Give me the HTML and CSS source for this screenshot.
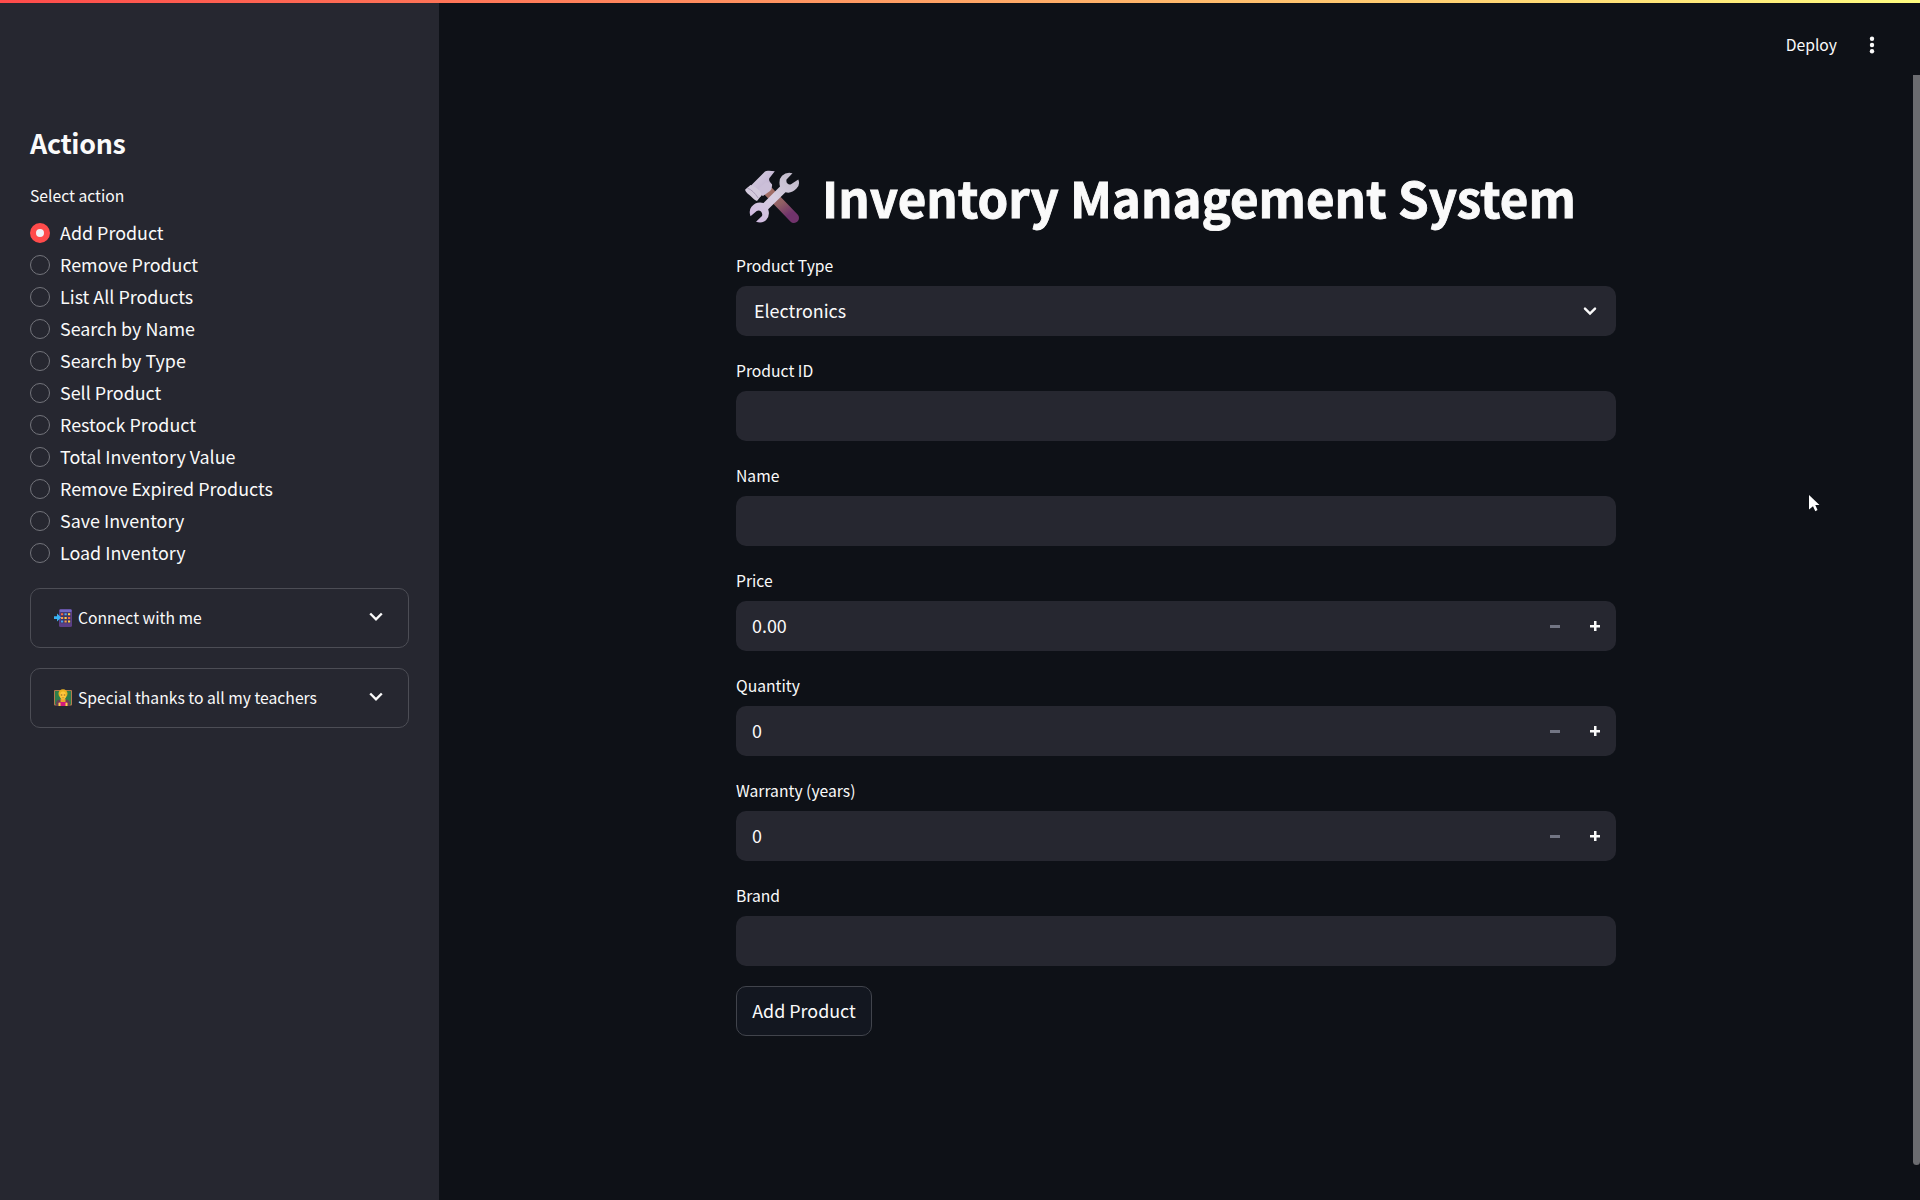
FILE: index.html
```html
<!DOCTYPE html>
<html lang="en">
<head>
<meta charset="utf-8">
<title>Inventory Management System</title>
<link rel="stylesheet" href="styles.css">
</head>
<body>
<div class="decoration"></div>
<div class="app">
  <aside class="sidebar">
    <h2 class="sidebar-title">Actions</h2>
    <div class="radio-label">Select action</div>
    <div class="radio-group">
      <div class="radio"><span class="dot checked"></span><span class="radio-text">Add Product</span></div>
      <div class="radio"><span class="dot"></span><span class="radio-text">Remove Product</span></div>
      <div class="radio"><span class="dot"></span><span class="radio-text">List All Products</span></div>
      <div class="radio"><span class="dot"></span><span class="radio-text">Search by Name</span></div>
      <div class="radio"><span class="dot"></span><span class="radio-text">Search by Type</span></div>
      <div class="radio"><span class="dot"></span><span class="radio-text">Sell Product</span></div>
      <div class="radio"><span class="dot"></span><span class="radio-text">Restock Product</span></div>
      <div class="radio"><span class="dot"></span><span class="radio-text">Total Inventory Value</span></div>
      <div class="radio"><span class="dot"></span><span class="radio-text">Remove Expired Products</span></div>
      <div class="radio"><span class="dot"></span><span class="radio-text">Save Inventory</span></div>
      <div class="radio"><span class="dot"></span><span class="radio-text">Load Inventory</span></div>
    </div>
    <div class="expander">
      <svg class="emoji" width="18" height="18" viewBox="0 0 18 18">
        <rect x="5" y="0" width="13" height="18" rx="1.6" fill="#5b3f86"/>
        <rect x="5.6" y="0.5" width="12" height="2.4" rx="1" fill="#7168c4"/>
        <rect x="6.5" y="3.4" width="10.2" height="10.8" fill="#3d3565"/>
        <path d="M7 4.2h2.2v2H7zM14 7.9h2.2v2H14z" fill="#f4673f"/>
        <path d="M10.5 4.2h2.2v2h-2.2zM7 11.5h2.2v2H7z" fill="#4ba5f0"/>
        <path d="M14 4.2h2.2v2H14zM10.5 7.9h2.2v2h-2.2zM14 11.5h2.2v2H14z" fill="#ffcf45"/>
        <path d="M7 7.9h2.2v2H7zM10.5 11.5h2.2v2h-2.2z" fill="#ff9a4c"/>
        <path d="M0 7.3h3V4.6l4.2 4-4.2 4V10H0z" fill="#39b3f5"/>
      </svg>
      <span class="expander-text">Connect with me</span>
      <svg class="chevron" width="14" height="10" viewBox="0 0 14 10"><path d="M1.2 1.5 7 7.3 12.8 1.5" fill="none" stroke="#fafafa" stroke-width="2.4"/></svg>
    </div>
    <div class="expander">
      <svg class="emoji" width="18" height="18" viewBox="0 0 18 18">
        <rect x="0" y="1" width="18" height="15.5" rx="1" fill="#b57a4d"/>
        <rect x="1" y="2" width="16" height="13.5" fill="#2f7d4b"/>
        <path d="M2 17v-3.5Q2.5 11 6 10.5h6q3.5 .5 4 3V17z" fill="#654052"/>
        <path d="M6.5 10h5v3h-5z" fill="#e9a52d"/>
        <circle cx="9" cy="4.8" r="4.5" fill="#eeb31f"/>
        <ellipse cx="9" cy="6.5" rx="3" ry="4" fill="#ffc83d"/>
        <path d="M6.8 6h1.5M9.8 6h1.5" stroke="#8b5b25" stroke-width="1"/>
        <path d="M7.8 8.8h2.5" stroke="#c77a21" stroke-width=".7"/>
        <path d="M5 13h8v4H5z" fill="#d11b7c"/>
        <path d="M4.5 13.7h2v3.3h-2zM11.5 13.7h2v3.3h-2z" fill="#ffd04a"/>
      </svg>
      <span class="expander-text">Special thanks to all my teachers</span>
      <svg class="chevron" width="14" height="10" viewBox="0 0 14 10"><path d="M1.2 1.5 7 7.3 12.8 1.5" fill="none" stroke="#fafafa" stroke-width="2.4"/></svg>
    </div>
  </aside>
  <main class="main">
    <header class="toolbar">
      <span class="deploy">Deploy</span>
      <svg class="menu" width="6" height="18" viewBox="0 0 6 18" fill="#fafafa"><circle cx="3" cy="2.7" r="2.2"/><circle cx="3" cy="9" r="2.2"/><circle cx="3" cy="15.3" r="2.2"/></svg>
    </header>
    <div class="content">
      <h1 class="title">
        <svg class="tools" width="56" height="56" viewBox="0 0 56 56">
          <defs>
            <linearGradient id="handle" x1="0" y1="0" x2=".6" y2="1"><stop offset="0" stop-color="#a47167"/><stop offset=".55" stop-color="#916064"/><stop offset="1" stop-color="#71336c"/></linearGradient>
            <linearGradient id="steel" x1="0" y1="0" x2="1" y2="1"><stop offset="0" stop-color="#d9d1e3"/><stop offset="1" stop-color="#b9a9cb"/></linearGradient>
            <linearGradient id="wrench" x1="1" y1="0" x2="0" y2="1"><stop offset="0" stop-color="#bdb6c5"/><stop offset=".5" stop-color="#d7cfe1"/><stop offset="1" stop-color="#ceb5df"/></linearGradient>
          </defs>
          <path d="M24 21 50 48" stroke="url(#handle)" stroke-width="10" stroke-linecap="round"/>
          <path d="M21 1.5Q22.500.5 25 .8L30.8 1.2 25.5 8Q24.5 10 26 12L28 14.5 16 27 5.5 17z" fill="url(#steel)"/>
          <path d="M15 18 21.5 12.5Q25.5 11.5 28 14.5 28.5 18 26 21L19 26Q14 24 15 18z" fill="#cbbfd8"/>
          <path d="M6.5 15Q11 16 15.5 20.5 18 24 17 26L13 31Q11 30.5 6 25.5 .8 21.5 1.2 19.5z" fill="#d3cadd"/>
          <path d="M3.5 18.2Q9 20 14.3 28.2" fill="none" stroke="#a99bb8" stroke-width="1"/>
          <path d="M48.5 3.2 42.5 9.6Q42 12.5 43.5 13.6 45 15 47 14.3L54.3 9.5Q56.5 14.5 52.5 18.6 47.5 24 41.5 22.3L24.2 39.2Q26.3 46.5 22 50.2 18 53.8 12 51.8L18 46Q18.8 43.5 17 41.6 15.2 40 12.7 41L6.5 46.2Q4.5 40.5 7.5 36.8 12 31.2 19.5 33L36 16.5Q34.3 9.5 38 5.8 42.5 1.5 48.5 3.2z" fill="url(#wrench)"/>
        </svg>
        <span class="title-text">Inventory Management System</span>
      </h1>
      <div class="field"><label class="label">Product Type</label>
        <div class="input select"><span class="value">Electronics</span><svg class="select-arrow" width="14" height="10" viewBox="0 0 14 10"><path d="M2 2.7 7 7.6 12 2.7" fill="none" stroke="#fafafa" stroke-width="2.5" stroke-linecap="round"/></svg></div></div>
      <div class="field"><label class="label">Product ID</label><div class="input"></div></div>
      <div class="field"><label class="label">Name</label><div class="input"></div></div>
      <div class="field"><label class="label">Price</label>
        <div class="input"><span class="value">0.00</span><span class="step minus"></span><span class="step plus"></span></div></div>
      <div class="field"><label class="label">Quantity</label>
        <div class="input"><span class="value">0</span><span class="step minus"></span><span class="step plus"></span></div></div>
      <div class="field"><label class="label">Warranty (years)</label>
        <div class="input"><span class="value">0</span><span class="step minus"></span><span class="step plus"></span></div></div>
      <div class="field"><label class="label">Brand</label><div class="input"></div></div>
      <button class="button">Add Product</button>
    </div>
  </main>
</div>
<div class="scrollbar"></div>
<svg class="cursor" width="12" height="18" viewBox="0 0 12 18"><path d="M0 0 10.5 10H6.3L8.5 15 6.3 16.3 4 11.2 0 14.5z" fill="#fff"/></svg>
</body>
</html>
```

FILE: styles.css
```css
* { box-sizing: border-box; }
body {
  margin: 0;
  height: 1200px;
  overflow: hidden;
  background: #0e1117;
  color: #fafafa;
  font-family: "Noto Sans CJK SC", sans-serif;
  font-size: 17.9px;
}
.decoration {
  position: absolute;
  top: 0;
  left: 0;
  width: 100%;
  height: 3px;
  background: linear-gradient(90deg, #ff4b4b, #fffd80);
}
.app { display: flex; height: 1200px; }
.sidebar {
  width: 439px;
  padding: 125px 30px 0;
  background: #262730;
}
.sidebar-title {
  margin: 0 0 20px;
  font-size: 26.8px;
  line-height: 36px;
  font-weight: 700;
  letter-spacing: -0.3px;
}
.radio-label { font-size: 15.7px; line-height: 30px; }
.radio-group {
  display: flex;
  flex-direction: column;
  gap: 2px;
  margin: 7px 0 20px;
}
.radio {
  display: flex;
  align-items: center;
  gap: 10px;
  height: 30px;
  line-height: 30px;
}
.radio-text { padding-bottom: 2px; }
.dot {
  width: 20px;
  height: 20px;
  border: 1px solid #73747b;
  border-radius: 50%;
}
.dot.checked { border: 6px solid #ff4b4b; background: #f0f2f6; }
.expander {
  display: flex;
  align-items: center;
  height: 60px;
  margin-bottom: 20px;
  padding: 0 25px 0 23px;
  border: 1px solid #4c4d55;
  border-radius: 10px;
  font-size: 15.7px;
}
.expander-text { margin-left: 6px; padding-bottom: 2px; }
.chevron { margin: 0 0 2px auto; }
.main { flex: 1; }
.toolbar {
  display: flex;
  justify-content: flex-end;
  align-items: center;
  height: 75px;
  padding: 15px 45px 0 0;
  font-size: 15.7px;
}
.deploy { padding-bottom: 2px; }
.menu { margin-left: 32px; }
.content {
  display: flex;
  flex-direction: column;
  gap: 20px;
  width: 880px;
  margin: 90px 0 0 297px;
}
.title {
  display: flex;
  align-items: center;
  height: 66px;
  margin: 0;
  padding-left: 8px;
  font-size: 49.2px;
  line-height: 66px;
}
.tools { margin-right: 22px; }
.title-text {
  padding-bottom: 3px;
  white-space: nowrap;
  -webkit-text-stroke: 0.9px #fafafa;
}
.label {
  display: block;
  height: 30px;
  margin-bottom: 5px;
  font-size: 15.7px;
  line-height: 30px;
}
.input {
  display: flex;
  align-items: center;
  height: 50px;
  padding: 0 1px 0 16px;
  border-radius: 10px;
  background: #262730;
}
.select { padding: 0 19px 0 18px; }
.value { flex: 1; padding-bottom: 2px; }
.step {
  width: 40px;
  height: 50px;
  background: linear-gradient(#737684, #737684) center / 10px 3px no-repeat;
}
.plus {
  background:
    linear-gradient(#fafafa, #fafafa) center / 10px 2.5px no-repeat,
    linear-gradient(#fafafa, #fafafa) center / 2.5px 10px no-repeat;
}
.button {
  width: 136px;
  height: 50px;
  padding: 0 0 2px;
  border: 1px solid #41444c;
  border-radius: 10px;
  background: #131720;
  color: #fafafa;
  font: inherit;
}
.scrollbar {
  position: absolute;
  top: 75px;
  right: 0;
  width: 7px;
  height: 1090px;
  border-radius: 0 0 4px 4px;
  background: #6b6c70;
}
.cursor { position: absolute; left: 1809px; top: 495px; }
```
